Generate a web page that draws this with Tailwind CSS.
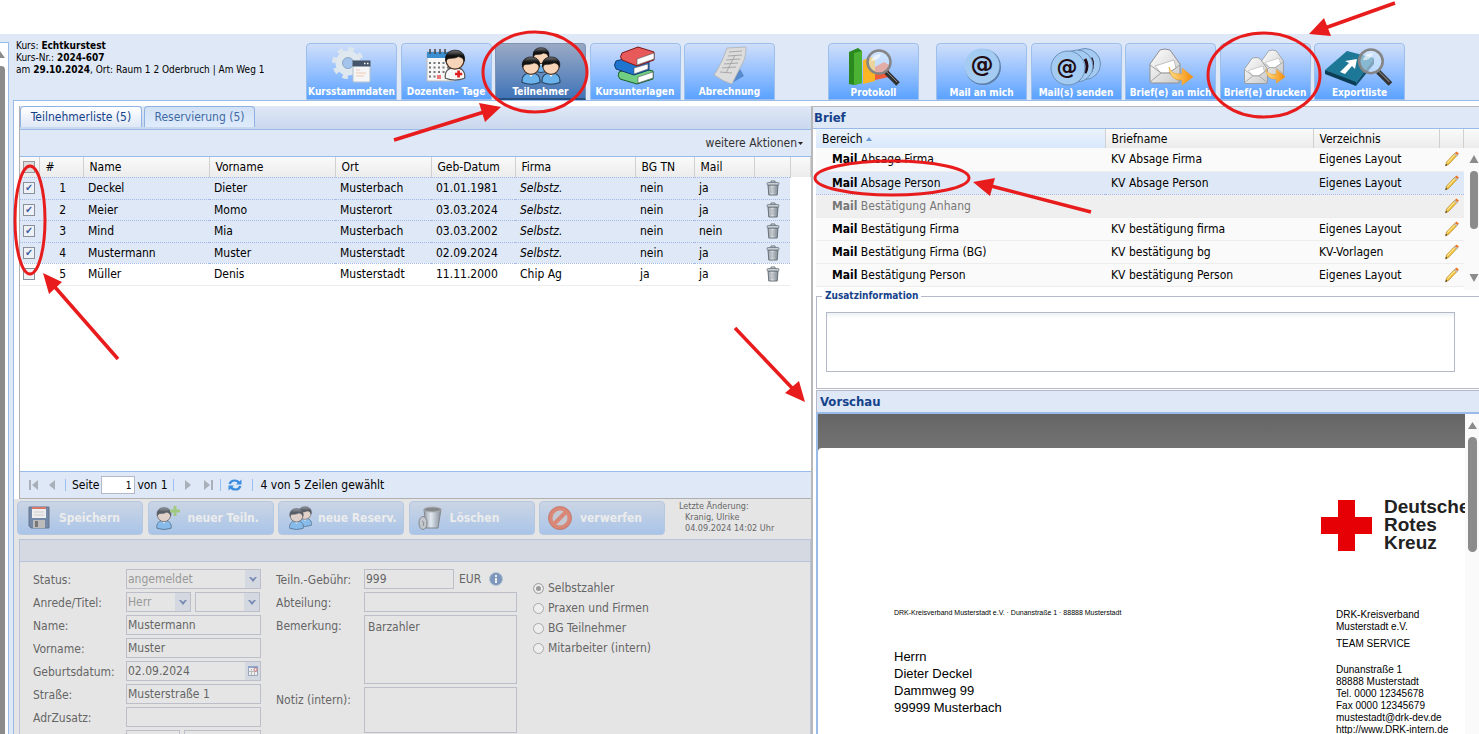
<!DOCTYPE html>
<html lang="de">
<head>
  <meta charset="UTF-8" />
  <meta name="viewport" content="width=device-width, initial-scale=1.0" />
  <title>Kursverwaltung - Teilnehmer</title>
  <script src="https://cdn.jsdelivr.net/npm/@tailwindcss/browser@4"></script>
</head>
<body class="relative flex h-screen flex-col overflow-hidden bg-white pt-[34px] font-['DejaVu_Sans_Condensed','Noto_Sans',sans-serif] text-[12px] leading-4 text-black">

  <!-- Gemeinsame Symbole -->
  <svg class="absolute size-0" aria-hidden="true">
    <defs>
      <linearGradient id="metal" x1="0" x2="1"><stop offset="0" stop-color="#8b949b" /><stop offset=".4" stop-color="#eef1f3" /><stop offset="1" stop-color="#77818a" /></linearGradient>
      <linearGradient id="hair" x1="0" y1="0" x2="0" y2="1"><stop offset="0" stop-color="#777" /><stop offset=".5" stop-color="#111" /></linearGradient>
      <linearGradient id="paper" x1="0" y1="0" x2="1" y2="1"><stop offset="0" stop-color="#fff" /><stop offset="1" stop-color="#c9c9c9" /></linearGradient>
      <linearGradient id="orange" x1="0" x2="1"><stop offset="0" stop-color="#ffe08a" /><stop offset="1" stop-color="#f58a07" /></linearGradient>
    </defs>
    <symbol id="trash" viewBox="0 0 14 16">
      <path d="M5 2.500V1h4v1.500" fill="none" stroke="#68727b" />
      <path d="M2 5h10l-.8 10H2.800z" fill="url(#metal)" stroke="#68727b" />
      <path d="M5 6.500v7M7 6.500v7M9 6.500v7" stroke="#8a949c" stroke-width=".8" />
      <rect x="1" y="2.500" width="12" height="2.500" rx="1.200" fill="#c9d0d5" stroke="#68727b" stroke-width=".8" />
    </symbol>
    <symbol id="pencil" viewBox="0 0 16 16">
      <path d="M1.500 15l1-4L10.500 2.500l2.500 2L4.800 13.200z" fill="#f4c542" stroke="#a97b1c" stroke-width=".6" />
      <path d="M3.500 11.500l7.800-8.300" stroke="#fff0b0" />
      <path d="M10 3l2.800 2.200 1-1.200L11 1.900z" fill="#ccc" stroke="#999" stroke-width=".4" />
      <path d="M11 1.900L12.300.6l2.600 2-1.100 1.400z" fill="#f2711c" />
      <path d="M1.500 15l.5-2.200 1.400 1.300z" fill="#333" />
    </symbol>
    <symbol id="person" viewBox="0 0 20 26">
      <path d="M2 24c-1-6 3-9 8-9s9 3 8 9q-8 3-16 0z" fill="#6bb3ec" stroke="#24435e" />
      <path d="M8 16l2 3 2-3z" fill="#fff" />
      <circle cx="10" cy="9" r="7.500" fill="#f8d5b8" stroke="#4a3326" />
      <path d="M2.300 10C1 3 6 .5 10.500.7 16 .8 19 5 17.700 10c-1-3-3-3.500-5-4-3 2-7 1-8.500 1.800-1.200.6-1.200 1.500-1.900 2.200z" fill="url(#hair)" stroke="#111" stroke-width=".6" />
    </symbol>
    <symbol id="doctor" viewBox="0 0 20 26">
      <path d="M2 24c-1-6 3-9 8-9s9 3 8 9q-8 3-16 0z" fill="#f8f8f8" stroke="#555" />
      <path d="M13 17.500v6M10 20.500h6" stroke="#e02020" stroke-width="2.200" />
      <circle cx="10" cy="9" r="7.500" fill="#f8d5b8" stroke="#4a3326" />
      <path d="M2.300 10C1 3 6 .5 10.500.7 16 .8 19 5 17.700 10c-1-3-3-3.500-5-4-3 2-7 1-8.500 1.800-1.200.6-1.200 1.500-1.900 2.200z" fill="url(#hair)" stroke="#111" stroke-width=".6" />
    </symbol>
    <symbol id="envelope" viewBox="0 0 34 36">
      <path d="M2 16L12 2q5-2 10 0l10 14v17q0 2-2 2H4q-2 0-2-2z" fill="url(#paper)" stroke="#909090" />
      <path d="M7 18l19-6 2 8-8 5h-7z" fill="#fff" stroke="#aaa" stroke-width=".7" />
      <path d="M2 17l11 8h8l11-8M2 34l11-9M32 34l-11-9" fill="none" stroke="#999" stroke-width=".9" />
    </symbol>
    <symbol id="forward" viewBox="0 0 26 20">
      <path d="M1 1q2 8 13 7V2l11 9-11 8v-5Q2 15 1 1z" fill="url(#orange)" stroke="#e99a25" stroke-width=".6" />
    </symbol>
    <symbol id="lens" viewBox="0 0 36 38">
      <path d="M21 24l12 12" stroke="#333" stroke-width="5" />
      <path d="M21 23l11 11" stroke="#888" stroke-width="1" />
      <circle cx="14" cy="14" r="11.500" fill="#dceeff" fill-opacity=".55" stroke="#858585" stroke-width="2.500" />
      <path d="M6 13q2-7 10-7-2 7-10 7z" fill="#fff" fill-opacity=".6" />
    </symbol>
  </svg>

  <div class="flex min-h-0 flex-1 bg-[#dfe8f6]">
    <!-- Rand mit Bildlaufleiste -->
    <div class="mt-2 w-[9px] shrink-0 border-t border-r border-[#99bbe8] bg-white">
      <svg class="h-[23px] w-[5px]" viewBox="0 0 5 23"><path d="M0 8l5 7H0z" fill="#8b8b8b" /></svg>
      <div class="h-full w-[5px] rounded-tr bg-[#8b8b8b]"></div>
    </div>

    <div class="ml-1 flex min-w-0 flex-1 flex-col">
      <!-- Kopfbereich -->
      <header class="flex h-[66px] shrink-0 items-end">
        <div class="h-full w-[293px] pt-[6px] pl-[3px] text-[10px] leading-3 whitespace-nowrap">
          <p>Kurs: <b>Echtkurstest</b></p>
          <p>Kurs-Nr.: <b>2024-607</b></p>
          <p>am <b>29.10.2024</b>, Ort: Raum 1 2 Oderbruch | Am Weg 1</p>
        </div>
        <nav class="flex w-[469px] shrink-0 justify-between text-[10px] leading-3 font-bold text-white">
          <button class="flex h-[57px] w-[91px] flex-col items-center rounded-t-sm border border-[#9dbfec] bg-linear-to-b from-[#cfdefa] to-[#5aa2ff] pt-[2px] whitespace-nowrap">
            <svg class="h-10 w-11 shrink-0" viewBox="0 0 44 40">
              <circle cx="18" cy="17" r="13.500" fill="none" stroke="#dce6ec" stroke-width="5" stroke-dasharray="5.300 5.300" />
              <circle cx="18" cy="17" r="9" fill="none" stroke="#dfe8ee" stroke-width="7" />
              <circle cx="18" cy="17" r="5.500" fill="#a5c4ec" stroke="#8fa9c4" />
              <rect x="23" y="15" width="17" height="21" rx="1" fill="#f3f5f6" stroke="#b7c2cc" />
              <path d="M22.500 14.500h18v6h-18z" fill="#45566b" />
              <path d="M34 17.500h1.500M37 17.500h1.500" stroke="#fff" stroke-width="1.500" />
              <path d="M26 24h4M26 27h10M26 30h8" stroke="#f4c9b0" />
            </svg>
            Kursstammdaten
          </button>
          <button class="flex h-[57px] w-[91px] flex-col items-center rounded-t-sm border border-[#9dbfec] bg-linear-to-b from-[#cfdefa] to-[#5aa2ff] pt-[2px] whitespace-nowrap">
            <svg class="h-10 w-11 shrink-0" viewBox="0 0 44 40">
              <path d="M3 6h27v29H3z" fill="#f7f7f7" stroke="#bbb" />
              <path d="M3 6h27v6H3z" fill="#3b8fd0" />
              <path d="M6 3v5M11 3v5M16 3v5M21 3v5" stroke="#444" stroke-width="1.500" />
              <path d="M5 17h24M5 21.500h24M5 26h24M5 30.500h10" stroke="#777" stroke-width="2" stroke-dasharray="2 2.500" />
              <path d="M13 29h4v4h-4z" fill="#e77" />
              <use href="#doctor" x="19" y="1" width="24" height="36" />
            </svg>
            Dozenten- Tage
          </button>
          <button class="flex h-[57px] w-[91px] flex-col items-center rounded-t-sm border border-b-2 border-[#7d93b5] border-b-[#28507f] bg-linear-to-b from-[#9aa9c4] to-[#3f74b8] pt-[2px] whitespace-nowrap">
            <svg class="h-10 w-11 shrink-0" viewBox="0 0 44 40">
              <use href="#person" x="12" y="0" width="20" height="28" />
              <use href="#person" x="1" y="9" width="22" height="31" />
              <use href="#person" x="21" y="9" width="22" height="31" />
            </svg>
            Teilnehmer
          </button>
          <button class="flex h-[57px] w-[91px] flex-col items-center rounded-t-sm border border-[#9dbfec] bg-linear-to-b from-[#cfdefa] to-[#5aa2ff] pt-[2px] whitespace-nowrap">
            <svg class="h-10 w-11 shrink-0" viewBox="0 0 44 40">
              <g stroke-linejoin="round">
                <path d="M6 26l15-5 19 4v8l-16 5-17-5q-3-3-1-7z" fill="#6fce82" stroke="#1c5c2b" />
                <path d="M25 31l15-5v6l-15 5z" fill="#fff" stroke="#555" stroke-width=".6" />
                <path d="M3 15l15-4 18 5v8l-15 5-18-6q-3-4 0-8z" fill="#1f74cf" stroke="#123d70" />
                <path d="M21 22l14-4v5l-14 5z" fill="#fff" stroke="#555" stroke-width=".6" />
                <path d="M9 7L25 1l16 5v8L24 20 9 14q-3-3 0-7z" fill="#e85a5a" stroke="#7c1717" />
                <path d="M24 13l17-6v6l-17 6z" fill="#fff" stroke="#555" stroke-width=".6" />
              </g>
            </svg>
            Kursunterlagen
          </button>
          <button class="flex h-[57px] w-[91px] flex-col items-center rounded-t-sm border border-[#9dbfec] bg-linear-to-b from-[#cfdefa] to-[#5aa2ff] pt-[2px] whitespace-nowrap">
            <svg class="h-10 w-11 shrink-0" viewBox="0 0 44 40">
              <path d="M22 38l14-8-4-7z" fill="#2f67ad" opacity=".6" />
              <path d="M19 2l19-1q0 12-5 19l-9 18q-8-2-18-9 7-10 13-27z" fill="#dcdcdc" stroke="#aaa" stroke-width=".7" />
              <path d="M21 6l13-1M20 10l14-1M18 14l14-1M16 18l14-1M14 22l14-1M12 26l12 1M27 9l-9 18" stroke="#a7a7a7" />
            </svg>
            Abrechnung
          </button>
        </nav>
        <div class="ml-[53px] flex shrink-0 gap-[17px] text-[10px] leading-3 font-bold text-white">
          <button class="flex h-[57px] w-[91px] flex-col items-center rounded-t-sm border border-[#9dbfec] bg-linear-to-b from-[#cfdefa] to-[#5aa2ff] pt-[3px] whitespace-nowrap">
            <svg class="h-10 w-[52px] shrink-0" viewBox="0 0 52 40">
              <path d="M1 5l9-4 4 3v32l-8 2-5-1z" fill="#2b8a1f" />
              <path d="M6 6l8-2v32l-8 2z" fill="#4bb233" />
              <path d="M15 13l9-3 3 3v21l-12 3z" fill="#fbb524" />
              <path d="M27 20l9-5 5 3v12l-14 3z" fill="#ee5c3c" />
              <use href="#lens" x="16" y="1" width="38" height="38" />
            </svg>
            Protokoll
          </button>
          <div class="flex w-[469px] justify-between">
            <button class="flex h-[57px] w-[91px] flex-col items-center rounded-t-sm border border-[#9dbfec] bg-linear-to-b from-[#cfdefa] to-[#5aa2ff] pt-[3px] whitespace-nowrap">
              <svg class="h-10 w-11 shrink-0" viewBox="0 0 44 40">
                <circle cx="23" cy="20" r="18" fill="#5d7fa8" />
                <circle cx="22" cy="19" r="17.500" fill="#a4cbf1" />
                <text x="22" y="25" text-anchor="middle" font-family="DejaVu Sans" font-size="23" font-weight="bold" fill="#220c12">@</text>
              </svg>
              Mail an mich
            </button>
            <button class="flex h-[57px] w-[91px] flex-col items-center rounded-t-sm border border-[#9dbfec] bg-linear-to-b from-[#cfdefa] to-[#5aa2ff] pt-[3px] whitespace-nowrap">
              <svg class="h-10 w-[52px] shrink-0" viewBox="0 0 52 40">
                <g fill="#a4cbf1" stroke="#6c8fb8">
                  <circle cx="35" cy="17" r="15.500" /><path d="M41 11q3 6 0 13" fill="none" stroke="#220c12" stroke-width="3" />
                  <circle cx="27" cy="19" r="16" /><path d="M35 12q4 7 0 14" fill="none" stroke="#220c12" stroke-width="3" />
                  <circle cx="18" cy="21" r="17" />
                </g>
                <text x="17" y="27" text-anchor="middle" font-family="DejaVu Sans" font-size="21" font-weight="bold" fill="#220c12">@</text>
              </svg>
              Mail(s) senden
            </button>
            <button class="flex h-[57px] w-[91px] flex-col items-center rounded-t-sm border border-[#9dbfec] bg-linear-to-b from-[#cfdefa] to-[#5aa2ff] pt-[3px] whitespace-nowrap">
              <svg class="h-10 w-[52px] shrink-0" viewBox="0 0 52 40">
                <use href="#envelope" x="3" y="1" width="34" height="36" />
                <use href="#forward" x="23" y="19" width="26" height="20" />
              </svg>
              Brief(e) an mich
            </button>
            <button class="flex h-[57px] w-[91px] flex-col items-center rounded-t-sm border border-[#9dbfec] bg-linear-to-b from-[#cfdefa] to-[#5aa2ff] pt-[3px] whitespace-nowrap">
              <svg class="h-10 w-[52px] shrink-0" viewBox="0 0 52 40">
                <use href="#envelope" x="21" y="1" width="25" height="29" />
                <use href="#envelope" x="4" y="9" width="26" height="29" />
                <use href="#forward" x="26" y="20" width="21" height="18" />
              </svg>
              Brief(e) drucken
            </button>
            <button class="flex h-[57px] w-[91px] flex-col items-center rounded-t-sm border border-[#9dbfec] bg-linear-to-b from-[#cfdefa] to-[#5aa2ff] pt-[3px] whitespace-nowrap">
              <svg class="h-10 w-[70px] shrink-0" viewBox="0 0 70 40">
                <path d="M0 23L22 4l27 7-18 25z" fill="#1d7796" />
                <path d="M0 23v4l31 12v-4z" fill="#0c3d56" />
                <path d="M31 36l18-25v6L31 39z" fill="#124f6c" />
                <path d="M15 25l9-9-4-2 12-2-2 10-3-3-7 8z" fill="#fff" />
                <use href="#lens" x="30" y="0" width="40" height="39" />
              </svg>
              Exportliste
            </button>
          </div>
        </div>
      </header>

      <main class="grid min-h-0 flex-1 grid-cols-[797fr_668fr] border-t border-l border-[#99bbe8] bg-white pt-[5px]">
        <!-- Linke Seite: Teilnehmerliste -->
        <section class="flex min-h-0 min-w-0 flex-col">
          <div class="ml-[5px] flex h-[365px] shrink-0 flex-col border-l border-[#b0b0b0]">
            <div class="flex h-6 shrink-0 items-end gap-[2px] border-b border-[#99bbe8] bg-linear-to-b from-[#dfe8f6] to-[#c9d8ee] pb-[2px] text-[#15428b]">
              <button class="h-[21px] w-[122px] rounded-t border border-b-0 border-[#8db2e3] bg-linear-to-b from-white to-[#dfe8f6]">Teilnehmerliste (5)</button>
              <button class="h-[21px] w-[111px] rounded-t border border-b-0 border-[#8db2e3] bg-linear-to-b from-[#d3e1f5] to-[#deecfd] text-[#416aa3]">Reservierung (5)</button>
            </div>
            <div class="flex h-[27px] shrink-0 items-center justify-end border-b border-[#99bbe8] bg-[#dfe8f6] pr-2">
              <button class="flex items-center gap-px text-[#333]">weitere Aktionen<svg class="size-[5px]" viewBox="0 0 5 5"><path d="M0 1h5L2.500 4z" fill="#222" /></svg></button>
            </div>
            <table class="w-full table-fixed border-collapse text-left">
              <colgroup>
                <col class="w-[19px]" /><col class="w-[44px]" /><col class="w-[126px]" /><col class="w-[126px]" /><col class="w-[96px]" /><col class="w-[84px]" /><col class="w-[120px]" /><col class="w-[59px]" /><col class="w-[60px]" /><col class="w-[36px]" /><col />
              </colgroup>
              <thead class="bg-linear-to-b from-[#fafafa] to-[#ececec]">
                <tr class="h-5 *:border-r *:border-[#d0d0d0] *:p-0 *:pl-[6px] *:font-normal">
                  <th><input type="checkbox" aria-label="Alle auswählen" class="-ml-[3px] block size-3 appearance-none border border-[#9a9a9a] bg-[#ddd]" /></th>
                  <th>#</th><th>Name</th><th>Vorname</th><th>Ort</th><th>Geb-Datum</th><th>Firma</th><th>BG TN</th><th>Mail</th><th></th><th></th>
                </tr>
              </thead>
              <tbody id="participants"></tbody>
            </table>
          </div>

          <!-- Blättern -->
          <div class="ml-[5px] flex h-7 shrink-0 items-center border-y border-l border-[#b0b0b0] border-t-[#99bbe8] bg-[#dfe8f6] pl-2">
            <button aria-label="Erste Seite"><svg class="h-[10px] w-[11px]" viewBox="0 0 11 10"><path d="M1 0h2v10H1zM10 0v10L4 5z" fill="#a9b0ba" /></svg></button>
            <button aria-label="Vorige Seite" class="ml-[10px]"><svg class="h-[10px] w-[7px]" viewBox="0 0 7 10"><path d="M6 0v10L0 5z" fill="#a9b0ba" /></svg></button>
            <i class="mr-[6px] ml-[9px] h-3 border-r border-[#99c0f0]"></i>
            <label for="page">Seite</label>
            <input id="page" type="text" value="1" class="mx-[2px] h-[18px] w-[34px] border border-[#b5b8c8] bg-white pr-[3px] text-right text-[10px]" />
            <span>von 1</span>
            <i class="ml-[5px] h-3 border-r border-[#99c0f0]"></i>
            <button aria-label="Nächste Seite" class="ml-[11px]"><svg class="h-[10px] w-[7px]" viewBox="0 0 7 10"><path d="M0 0v10l6-5z" fill="#a9b0ba" /></svg></button>
            <button aria-label="Letzte Seite" class="ml-[11px]"><svg class="h-[10px] w-[11px]" viewBox="0 0 11 10"><path d="M8 0h2v10H8zM1 0v10l6-5z" fill="#a9b0ba" /></svg></button>
            <i class="ml-[6px] h-3 border-r border-[#99c0f0]"></i>
            <button aria-label="Aktualisieren" class="ml-[7px]">
              <svg class="size-[14px]" viewBox="0 0 14 14"><path d="M1.500 6Q3 2.500 6.500 2.500T11 5M12.500 8Q11 11.500 7.500 11.500T3 9" fill="none" stroke="#3c8de0" stroke-width="2.200" /><path d="M13.500 1.500v5H8zM.5 12.500v-5H6z" fill="#3c8de0" /></svg>
            </button>
            <i class="mr-2 ml-[10px] h-3 border-r border-[#99c0f0]"></i>
            <span>4 von 5 Zeilen gewählt</span>
          </div>

          <!-- Bearbeitung, gesperrt -->
          <div class="flex min-h-0 flex-1 flex-col overflow-hidden bg-[#e5e5e5] pt-[2px] text-[#666]">
            <div class="flex h-[38px] shrink-0 items-start pl-[3px]">
              <div class="flex w-[648px] shrink-0 justify-between font-bold text-[#ececec] [text-shadow:1px_1px_1px_#777]">
                <button class="flex h-[34px] w-[126px] items-center gap-2 rounded-sm border border-[#b4c8e4] bg-linear-to-b from-[#cbd5e4] to-[#a9c4e8] pl-[9px]">
                  <svg class="size-6" viewBox="0 0 24 24"><path d="M2 1h20v21H4l-2-2z" fill="#7488a8" stroke="#66748c" /><path d="M5 1h14v11H5z" fill="#eee" /><path d="M5 1h14v2H5z" fill="#d9776b" /><path d="M7 6h10M7 9h10" stroke="#ccc" /><path d="M6 14h12v8H6z" fill="#bbb" /><path d="M8 15h3v6H8z" fill="#777" /></svg>
                  Speichern
                </button>
                <button class="flex h-[34px] w-[126px] items-center gap-2 rounded-sm border border-[#b4c8e4] bg-linear-to-b from-[#cbd5e4] to-[#a9c4e8] pl-[7px]">
                  <svg class="size-6 shrink-0 opacity-60" viewBox="0 0 24 24"><use href="#person" x="-1" y="1" width="18" height="23" /><path d="M19 0v10M14 5h10" stroke="#8cc63f" stroke-width="3" /></svg>
                  <span class="whitespace-nowrap">neuer Teiln.</span>
                </button>
                <button class="flex h-[34px] w-[126px] items-center gap-1 rounded-sm border border-[#b4c8e4] bg-linear-to-b from-[#cbd5e4] to-[#a9c4e8] pl-[9px]">
                  <svg class="h-6 w-[26px] shrink-0 opacity-60" viewBox="0 0 26 24"><use href="#person" x="9" y="0" width="16" height="21" /><use href="#person" x="0" y="2" width="17" height="22" /></svg>
                  <span class="whitespace-nowrap">neue Reserv.</span>
                </button>
                <button class="flex h-[34px] w-[126px] items-center gap-2 rounded-sm border border-[#b4c8e4] bg-linear-to-b from-[#cbd5e4] to-[#a9c4e8] pl-2">
                  <svg class="size-6 opacity-80" viewBox="0 0 24 24"><path d="M6 3h17l-3 19H8z" fill="url(#metal)" stroke="#777" /><ellipse cx="14.500" cy="3.500" rx="8.500" ry="2.500" fill="#777" stroke="#aaa" /><ellipse cx="5" cy="17" rx="4" ry="6.500" fill="#c9c9c9" stroke="#777" /><path d="M4 15q3 1 1 5" fill="none" stroke="#777" /></svg>
                  Löschen
                </button>
                <button class="flex h-[34px] w-[126px] items-center gap-2 rounded-sm border border-[#b4c8e4] bg-linear-to-b from-[#cbd5e4] to-[#a9c4e8] pl-2">
                  <svg class="size-6" viewBox="0 0 24 24"><circle cx="12" cy="12" r="9.500" fill="#c4c8d2" stroke="#d98878" stroke-width="4" /><path d="M6 18L18 6" stroke="#d98878" stroke-width="4" /><circle cx="12" cy="12" r="11.500" fill="none" stroke="#bd6a5c" stroke-width=".7" /></svg>
                  verwerfen
                </button>
              </div>
              <div class="ml-[14px] text-[9px] leading-[11px] whitespace-nowrap">
                <p>Letzte Änderung:</p>
                <p class="pl-[6px]">Kranig, Ulrike</p>
                <p class="pl-[6px]">04.09.2024 14:02 Uhr</p>
              </div>
            </div>

            <div class="ml-[5px] min-h-0 flex-1 border border-b-0 border-[#b7c4dc]">
              <div class="h-[22px] border-b border-[#b7c4dc] bg-[#d5d9e2]"></div>
              <form class="flex items-start pt-[7px] pl-[13px]">
                <div class="grid w-[228px] shrink-0 auto-rows-[20px] grid-cols-[93px_135px] gap-y-[3px]">
                  <label for="status" class="pt-[3px]">Status:</label>
                  <div class="relative h-5">
                    <select id="status" class="h-5 w-full appearance-none border border-[#bcbfca] pl-px text-[#999]"><option>angemeldet</option></select>
                    <svg class="pointer-events-none absolute top-px right-px h-[18px] w-[15px] bg-[#d4d8e0]" viewBox="0 0 15 18"><path d="M4 7h2l2 2 2-2h2L8 12z" fill="#7589b3" /></svg>
                  </div>
                  <label for="salutation" class="pt-[3px]">Anrede/Titel:</label>
                  <div class="flex gap-1">
                    <div class="relative h-5">
                      <select id="salutation" class="h-5 w-[65px] appearance-none border border-[#bcbfca] pl-px text-[#999]"><option>Herr</option></select>
                      <svg class="pointer-events-none absolute top-px right-px h-[18px] w-[15px] bg-[#d4d8e0]" viewBox="0 0 15 18"><path d="M4 7h2l2 2 2-2h2L8 12z" fill="#7589b3" /></svg>
                    </div>
                    <div class="relative h-5">
                      <select aria-label="Titel" class="h-5 w-[65px] appearance-none border border-[#bcbfca]"><option></option></select>
                      <svg class="pointer-events-none absolute top-px right-px h-[18px] w-[15px] bg-[#d4d8e0]" viewBox="0 0 15 18"><path d="M4 7h2l2 2 2-2h2L8 12z" fill="#7589b3" /></svg>
                    </div>
                  </div>
                  <label for="lastname" class="pt-[3px]">Name:</label>
                  <input id="lastname" type="text" value="Mustermann" class="h-5 w-full border border-[#bcbfca] pl-px" />
                  <label for="firstname" class="pt-[3px]">Vorname:</label>
                  <input id="firstname" type="text" value="Muster" class="h-5 w-full border border-[#bcbfca] pl-px" />
                  <label for="birthday" class="pt-[3px]">Geburtsdatum:</label>
                  <div class="relative h-5">
                    <input id="birthday" type="text" value="02.09.2024" class="h-5 w-full border border-[#bcbfca] pl-px" />
                    <svg class="pointer-events-none absolute top-px right-px h-[18px] w-[15px] bg-[#d4d8e0]" viewBox="0 0 15 18"><path d="M3.500 4.500h9v9h-9z" fill="#eee" stroke="#9aa6bd" /><path d="M3 4h10v2H3z" fill="#8fa4c8" /><path d="M6.500 7v6M9.500 7v6M4 9.500h8" stroke="#bbb" /><circle cx="10.500" cy="7.500" r="1.500" fill="#fff" stroke="#c66" /></svg>
                  </div>
                  <label for="street" class="pt-[3px]">Straße:</label>
                  <input id="street" type="text" value="Musterstraße 1" class="h-5 w-full border border-[#bcbfca] pl-px" />
                  <label for="extra" class="pt-[3px]">AdrZusatz:</label>
                  <input id="extra" type="text" class="h-5 w-full border border-[#bcbfca] pl-px" />
                  <span></span>
                  <div class="flex gap-1">
                    <input type="text" aria-label="PLZ" class="h-5 w-[54px] border border-[#bcbfca]" />
                    <input type="text" aria-label="Wohnort" class="h-5 w-[77px] border border-[#bcbfca]" />
                  </div>
                </div>

                <div class="ml-[15px] grid w-[241px] shrink-0 grid-cols-[88px_153px] gap-y-[3px]">
                  <label for="fee" class="pt-[3px]">Teiln.-Gebühr:</label>
                  <div class="flex items-center">
                    <input id="fee" type="text" value="999" class="h-5 w-[90px] border border-[#bcbfca] pl-px" />
                    <span class="ml-[5px]">EUR</span>
                    <svg class="ml-2 size-[14px]" viewBox="0 0 14 14"><circle cx="7" cy="7" r="6.500" fill="#7d96bd" stroke="#b9c4d6" /><path d="M7 6v5M7 3v2" stroke="#eee" stroke-width="2" /></svg>
                  </div>
                  <label for="department" class="pt-[3px]">Abteilung:</label>
                  <input id="department" type="text" class="h-5 w-full border border-[#bcbfca] pl-px" />
                  <label for="remark" class="pt-[3px]">Bemerkung:</label>
                  <textarea id="remark" class="block h-[69px] w-full resize-none border border-[#bcbfca] px-[3px] pt-[3px]">Barzahler</textarea>
                  <label for="note" class="pt-[5px]">Notiz (intern):</label>
                  <textarea id="note" class="block h-[46px] w-full resize-none border border-[#bcbfca] px-[3px]"></textarea>
                </div>

                <div class="ml-4 flex flex-col gap-1 pt-[11px]">
                  <label class="flex items-center gap-1"><input type="radio" name="payer" checked class="size-[11px] appearance-none rounded-full border border-[#aaa] bg-[#eee] checked:bg-[#999] checked:shadow-[inset_0_0_0_2px_#eee]" />Selbstzahler</label>
                  <label class="flex items-center gap-1"><input type="radio" name="payer" class="size-[11px] appearance-none rounded-full border border-[#aaa] bg-[#eee]" />Praxen und Firmen</label>
                  <label class="flex items-center gap-1"><input type="radio" name="payer" class="size-[11px] appearance-none rounded-full border border-[#aaa] bg-[#eee]" />BG Teilnehmer</label>
                  <label class="flex items-center gap-1"><input type="radio" name="payer" class="size-[11px] appearance-none rounded-full border border-[#aaa] bg-[#eee]" />Mitarbeiter (intern)</label>
                </div>
              </form>
            </div>
          </div>
        </section>

        <!-- Rechte Seite: Briefe und Vorschau -->
        <section class="flex min-h-0 min-w-0 flex-col border-l-2 border-[#b8b8b8]">
          <div class="h-[23px] shrink-0 border-t border-b border-[#b8b8b8] border-b-[#99bbe8] bg-[#dfe8f6] pl-px text-[13px] leading-[21px] font-bold text-[#15428b]">Brief</div>
          <div class="flex h-[161px] shrink-0 overflow-hidden pl-[3px]">
            <table class="min-w-0 flex-1 table-fixed border-collapse self-start text-left">
              <colgroup><col class="w-[289px]" /><col class="w-[208px]" /><col /><col class="w-6" /></colgroup>
              <thead class="bg-linear-to-b from-[#fafafa] to-[#ececec]">
                <tr class="h-[19px] *:border-r *:border-[#d0d0d0] *:p-0 *:pl-[6px] *:font-normal">
                  <th class="bg-linear-to-b from-[#ebf3fd] to-[#d9e8fb]">Bereich <svg class="inline h-1 w-[6px]" viewBox="0 0 6 4"><path d="M0 4h6L3 0z" fill="#6b9ad8" /></svg></th>
                  <th>Briefname</th><th>Verzeichnis</th><th></th>
                </tr>
              </thead>
              <tbody id="letters"></tbody>
            </table>
            <div class="w-[15px] shrink-0 bg-[#fafafa]">
              <div class="h-[19px] bg-linear-to-b from-[#fafafa] to-[#ececec]"></div>
              <svg class="h-[142px] w-[15px]" viewBox="0 0 15 142"><path d="M5.500 15L10 7l4.500 8zM5.500 126h9L10 134z" fill="#8b8b8b" /><rect x="6" y="23" width="8" height="58" rx="4" fill="#8b8b8b" /></svg>
            </div>
          </div>

          <fieldset class="-mr-2 ml-[3px] h-[99px] shrink-0 border border-[#b5b8c8] px-[9px] pt-[10px]">
            <legend class="-ml-1 px-[3px] text-[10px] leading-3 font-bold text-[#15428b]">Zusatzinformation</legend>
            <textarea aria-label="Zusatzinformation" class="block h-[60px] w-[calc(100%-22px)] resize-none border border-[#b5b8c8] bg-linear-to-b from-[#eef2f2] to-white to-10%"></textarea>
          </fieldset>

          <div class="mt-px ml-[3px] h-6 shrink-0 border-t border-b-2 border-l border-[#b5b8c8] border-b-[#99bbe8] bg-[#dfe8f6] pl-[3px] text-[13px] leading-[22px] font-bold text-[#15428b]">Vorschau</div>
          <div class="ml-[3px] flex min-h-0 flex-1 border-l-2 border-[#99bbe8]">
            <div class="flex min-w-0 flex-1 flex-col overflow-hidden bg-[#6c6c6c] bg-linear-to-b from-[#656565] to-[#727272] to-10%">
              <article class="mt-[34px] flex flex-1 justify-between overflow-hidden rounded-tl bg-white pl-[76px] font-['Liberation_Sans',Arial,sans-serif]">
                <div class="pt-[160px] whitespace-nowrap">
                  <p class="text-[7px] leading-[10px]">DRK-Kreisverband Musterstadt e.V. · Dunanstraße 1 · 88888 Musterstadt</p>
                  <p class="pt-[30px] text-[13px] leading-[17px]">Herrn<br />Dieter Deckel<br />Dammweg 99<br />99999 Musterbach</p>
                </div>
                <div class="w-[144px] shrink-0 overflow-hidden pt-[50px] whitespace-nowrap">
                  <div class="flex items-center gap-3">
                    <svg class="size-[51px] shrink-0" viewBox="0 0 51 51"><path d="M17 0h17v17h17v17H34v17H17V34H0V17h17z" fill="#e60005" /></svg>
                    <p class="text-[19px] leading-[18px] font-bold text-[#222]">Deutsches<br />Rotes<br />Kreuz</p>
                  </div>
                  <div class="pt-[57px] pl-[15px] text-[10px] leading-3">
                    <p>DRK-Kreisverband<br />Musterstadt e.V.</p>
                    <p class="pt-[5px]">TEAM SERVICE</p>
                    <p class="pt-[14px]">Dunanstraße 1<br />88888 Musterstadt<br />Tel. 0000 12345678<br />Fax 0000 12345679<br />mustestadt@drk-dev.de<br />http://www.DRK-intern.de</p>
                  </div>
                </div>
              </article>
            </div>
            <svg class="h-full w-[14px] shrink-0 bg-[#fafafa]"><path d="M3 15l4.500-7 4.500 7z" fill="#8b8b8b" /><rect x="3" y="23" width="9" height="115" rx="4.500" fill="#8b8b8b" /></svg>
          </div>
        </section>
      </main>
    </div>
  </div>

  <!-- Rote Markierungen -->
  <svg class="pointer-events-none absolute top-0 left-0 h-[734px] w-[1479px]" viewBox="0 0 1479 734">
    <g fill="none" stroke="#e81c1c" stroke-width="3">
      <ellipse cx="535" cy="72" rx="52" ry="40" />
      <ellipse cx="1264" cy="75" rx="56" ry="42" />
      <ellipse cx="30" cy="220" rx="15" ry="54" />
      <ellipse cx="892" cy="178" rx="77" ry="17" />
      <path d="M394 140l90-28M1395 3l-70 25M118 359L54 286M1091 212l-100-26M735 328l58 61" stroke-width="3.500" />
    </g>
    <path d="M501 107l-22-4 6 19zM1309 34l15-16 7 18zM43 273l19 9-13 12zM973 182l22-4-5 18zM805 402l-20-9 14-12z" fill="#e81c1c" />
  </svg>

  <script>
    const participants = [
      ["Deckel", "Dieter", "Musterbach", "01.01.1981", "Selbstz.", "nein", "ja", true],
      ["Meier", "Momo", "Musterort", "03.03.2024", "Selbstz.", "nein", "ja", true],
      ["Mind", "Mia", "Musterbach", "03.03.2002", "Selbstz.", "nein", "nein", true],
      ["Mustermann", "Muster", "Musterstadt", "02.09.2024", "Selbstz.", "nein", "ja", true],
      ["Müller", "Denis", "Musterstadt", "11.11.2000", "Chip Ag", "ja", "ja", false],
    ];

    const selectedCell = "border-y border-dotted border-[#a3bae9] bg-[#dfe8f6] p-0 pl-[5px]";
    const plainCell = "border-b border-[#ededed] p-0 pl-[5px]";

    document.getElementById("participants").innerHTML = participants.map((p, i) => {
      const cell = p[7] ? selectedCell : plainCell;
      const texts = p.slice(0, 7).map((t) => `<td class="${cell}">${t === "Selbstz." ? `<i>${t}</i>` : t}</td>`).join("");
      return `<tr class="h-[22px] even:h-[21px]">
        <td class="${cell}"><input type="checkbox" aria-label="${p[0]}" ${p[7] ? "checked" : ""} class="-ml-[2px] block size-3 appearance-none border border-[#8a9099] bg-[#eef1f6] text-center text-[10px] leading-[10px] font-bold text-[#3d5a9e] checked:before:content-['✔']" /></td>
        <td class="${cell} pr-[17px] text-right">${i + 1}</td>${texts}
        <td class="${cell}"><button aria-label="Löschen" class="ml-[7px] block"><svg class="h-4 w-[14px]"><use href="#trash" /></svg></button></td>
      </tr>`;
    }).join("");

    const plainRow = "border-b border-[#ededed] bg-[#fafafa]";
    const letters = [
      ["Absage Firma", "KV Absage Firma", "Eigenes Layout", plainRow],
      ["Absage Person", "KV Absage Person", "Eigenes Layout", "border-y border-dotted border-[#a3bae9] bg-[#dfe8f6]"],
      ["Bestätigung Anhang", "", "", "border-b border-[#ededed] bg-[#efefef] text-[#777]"],
      ["Bestätigung Firma", "KV bestätigung firma", "Eigenes Layout", plainRow],
      ["Bestätigung Firma (BG)", "KV bestätigung bg", "KV-Vorlagen", plainRow],
      ["Bestätigung Person", "KV bestätigung Person", "Eigenes Layout", plainRow],
    ];

    document.getElementById("letters").innerHTML = letters.map(([area, name, dir, look]) => `
      <tr class="h-[23px] ${look}">
        <td class="p-0 pl-4"><b>Mail</b> ${area}</td>
        <td class="p-0 pl-[6px]">${name}</td>
        <td class="p-0 pl-[6px]">${dir}</td>
        <td class="p-0 pl-1"><button aria-label="Bearbeiten" class="block"><svg class="size-4"><use href="#pencil" /></svg></button></td>
      </tr>`).join("");
  </script>
</body>
</html>
